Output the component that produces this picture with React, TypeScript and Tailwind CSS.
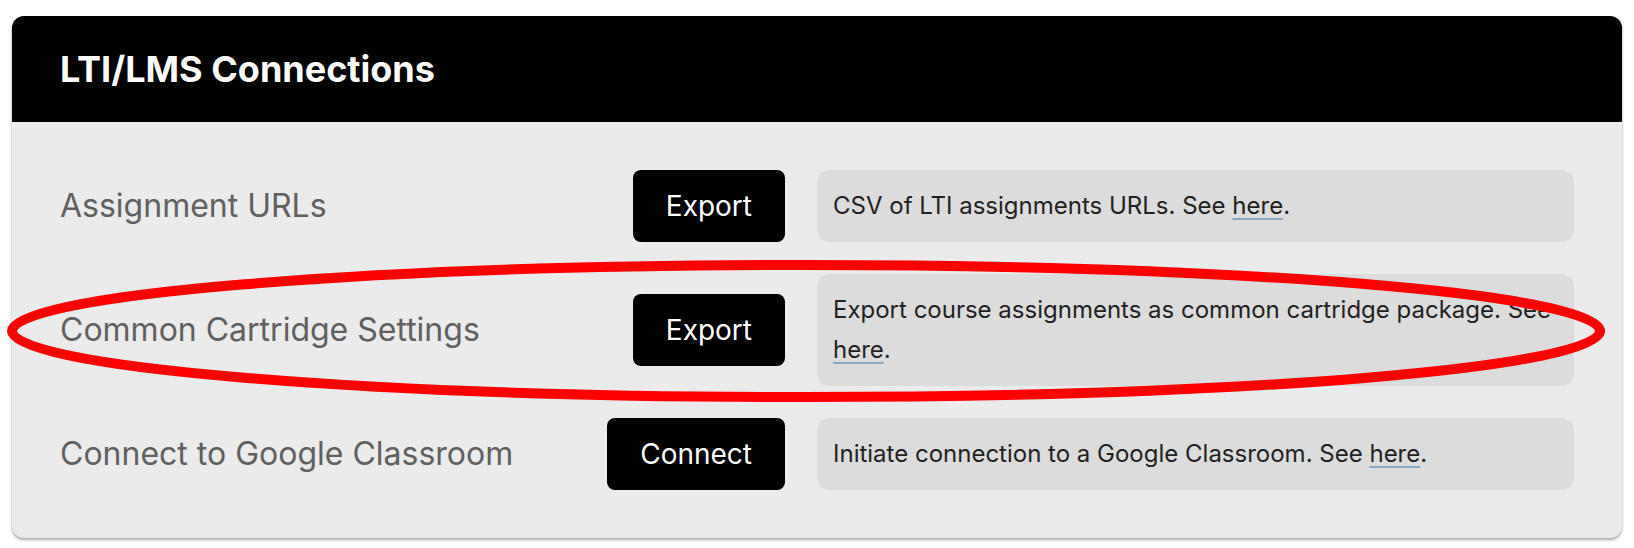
import React from "react";

type Row = {
  label: string;
  button: string;
  text: string;
};

const rows: Row[] = [
  { label: "Assignment URLs", button: "Export", text: "CSV of LTI assignments URLs. See " },
  {
    label: "Common Cartridge Settings",
    button: "Export",
    text: "Export course assignments as common cartridge package. See ",
  },
  {
    label: "Connect to Google Classroom",
    button: "Connect",
    text: "Initiate connection to a Google Classroom. See ",
  },
];

export default function App() {
  return (
    <div className="relative min-h-screen bg-white px-3 pt-4 font-['Inter',sans-serif]">
      <div className="overflow-hidden rounded-xl bg-[#ebebeb] shadow-[0_2px_3px_rgba(0,0,0,0.35)]">
        <div className="flex h-[106px] items-center bg-black px-12">
          <h2 className="text-[36px] font-bold text-white">LTI/LMS Connections</h2>
        </div>
        <div className="flex flex-col gap-8 px-12 py-12">
          {rows.map((r) => (
            <div key={r.label} className="flex items-center">
              <div className="flex-1 text-[32px] text-[#606060]">{r.label}</div>
              <button className="rounded-lg bg-black px-[33px] py-4 text-[28px] leading-10 text-white">
                {r.button}
              </button>
              <div className="ml-8 w-1/2 shrink-0 rounded-xl bg-[#dcdcdc] px-4 py-4 text-[24px] leading-10 text-[#222222]">
                {r.text}
                <a className="underline decoration-[#8aa7c6] decoration-2 underline-offset-4">here</a>.
              </div>
            </div>
          ))}
        </div>
      </div>
      <svg
        className="pointer-events-none absolute left-0 top-0"
        width="1634"
        height="548"
        viewBox="0 0 1634 548"
      >
        <ellipse cx="806" cy="331" rx="794" ry="66" fill="none" stroke="#ff0000" strokeWidth="10" />
      </svg>
    </div>
  );
}
